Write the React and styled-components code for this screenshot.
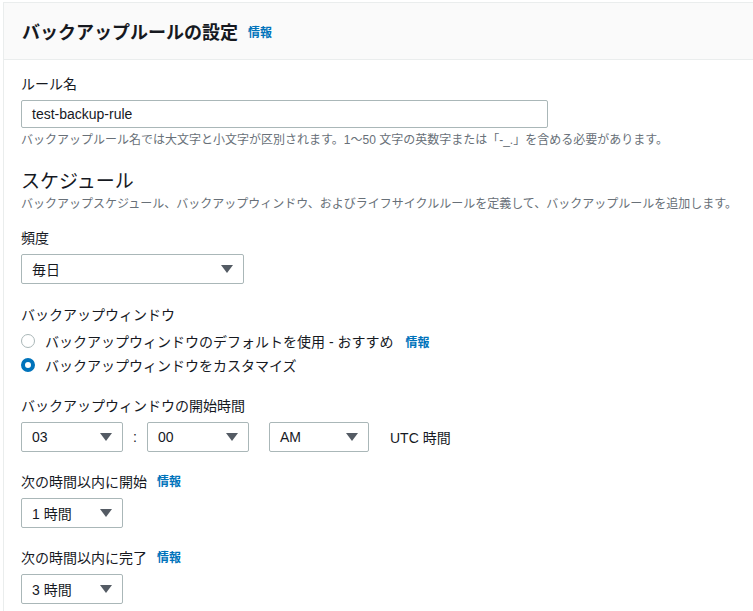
import styled, { createGlobalStyle } from "styled-components";

const Global = createGlobalStyle`
  body {
    margin: 0;
    background: #fff;
    font-family: "Liberation Sans", "Noto Sans CJK JP", sans-serif;
    color: #16191f;
  }
`;

const Panel = styled.div`
  margin: 2px 0 0 3px;
  border: 1px solid #eaeded;
  border-right: none;
  height: 620px;
  overflow: hidden;
`;

const Header = styled.div`
  background: #fafafa;
  border-bottom: 1px solid #eaeded;
  height: 56px;
  padding: 0 0 0 18px;
  display: flex;
  align-items: center;
  gap: 10px;
`;

const Title = styled.h2`
  margin: 0;
  font-size: 18px;
  font-weight: bold;
`;

const Info = styled.a`
  color: #0073bb;
  font-size: 12px;
  font-weight: bold;
  margin-left: ${(p) => p.$ml || 0}px;
`;

const Body = styled.div`
  padding: 14px 0 0 17px;
`;

const Label = styled.div`
  font-size: 14px;
  line-height: 20px;
  margin-top: ${(p) => p.$mt || 0}px;
  display: flex;
  align-items: center;
`;

const TextInput = styled.div`
  margin-top: 6px;
  width: 527px;
  height: 28px;
  box-sizing: border-box;
  border: 1px solid #aab7b8;
  border-radius: 2px;
  padding: 0 10px;
  font-size: 14px;
  display: flex;
  align-items: center;
`;

const Hint = styled.div`
  font-size: 12px;
  color: #687078;
  margin-top: ${(p) => (p.$mt == null ? 4 : p.$mt)}px;
  line-height: 16px;
`;

const Heading = styled.h3`
  margin: 22px 0 0;
  font-size: 19px;
  font-weight: normal;
  line-height: 24px;
`;

const Select = styled.div`
  width: ${(p) => p.$w}px;
  height: 30px;
  box-sizing: border-box;
  border: 1px solid #aab7b8;
  border-radius: 2px;
  padding: 0 10px;
  font-size: 14px;
  display: flex;
  align-items: center;
  justify-content: space-between;
  margin-top: ${(p) => p.$mt || 0}px;
`;

const Caret = styled.span`
  width: 0;
  height: 0;
  border-left: 6px solid transparent;
  border-right: 6px solid transparent;
  border-top: 8px solid #545b64;
`;

const Radio = styled.div`
  display: flex;
  align-items: center;
  gap: 10px;
  font-size: 14px;
  height: 24px;
  margin-top: ${(p) => p.$mt || 0}px;
`;

const Circle = styled.span`
  width: 14px;
  height: 14px;
  border-radius: 50%;
  box-sizing: border-box;
  border: ${(p) => (p.$on ? "4px solid #0073bb" : "1px solid #aab7b8")};
`;

const Row = styled.div`
  display: flex;
  align-items: center;
  margin-top: 6px;
`;

const Colon = styled.span`
  width: 24px;
  text-align: center;
  font-size: 14px;
`;

const Spacer = styled.span`
  width: ${(p) => p.$w}px;
`;

const Suffix = styled.span`
  margin-left: 21px;
  font-size: 14px;
`;

const Sel = ({ w, mt, children }) => (
  <Select $w={w} $mt={mt}>
    <span>{children}</span>
    <Caret />
  </Select>
);

export default function App() {
  return (
    <>
      <Global />
      <Panel>
        <Header>
          <Title>バックアップルールの設定</Title>
          <Info>情報</Info>
        </Header>
        <Body>
          <Label>ルール名</Label>
          <TextInput>test-backup-rule</TextInput>
          <Hint>バックアップルール名では大文字と小文字が区別されます。1〜50 文字の英数字または「-_.」を含める必要があります。</Hint>
          <Heading>スケジュール</Heading>
          <Hint $mt={2}>バックアップスケジュール、バックアップウィンドウ、およびライフサイクルルールを定義して、バックアップルールを追加します。</Hint>
          <Label $mt={16}>頻度</Label>
          <Sel w={223} mt={6}>毎日</Sel>
          <Label $mt={21}>バックアップウィンドウ</Label>
          <Radio $mt={4}>
            <Circle />
            バックアップウィンドウのデフォルトを使用 - おすすめ<Info $ml={2}>情報</Info>
          </Radio>
          <Radio>
            <Circle $on />
            バックアップウィンドウをカスタマイズ
          </Radio>
          <Label $mt={19}>バックアップウィンドウの開始時間</Label>
          <Row>
            <Sel w={102}>03</Sel>
            <Colon>:</Colon>
            <Sel w={102}>00</Sel>
            <Spacer $w={20} />
            <Sel w={100}>AM</Sel>
            <Suffix>UTC 時間</Suffix>
          </Row>
          <Label $mt={20}>次の時間以内に開始<Info $ml={10}>情報</Info></Label>
          <Sel w={102} mt={6}>1 時間</Sel>
          <Label $mt={20}>次の時間以内に完了<Info $ml={10}>情報</Info></Label>
          <Sel w={102} mt={6}>3 時間</Sel>
        </Body>
      </Panel>
    </>
  );
}
